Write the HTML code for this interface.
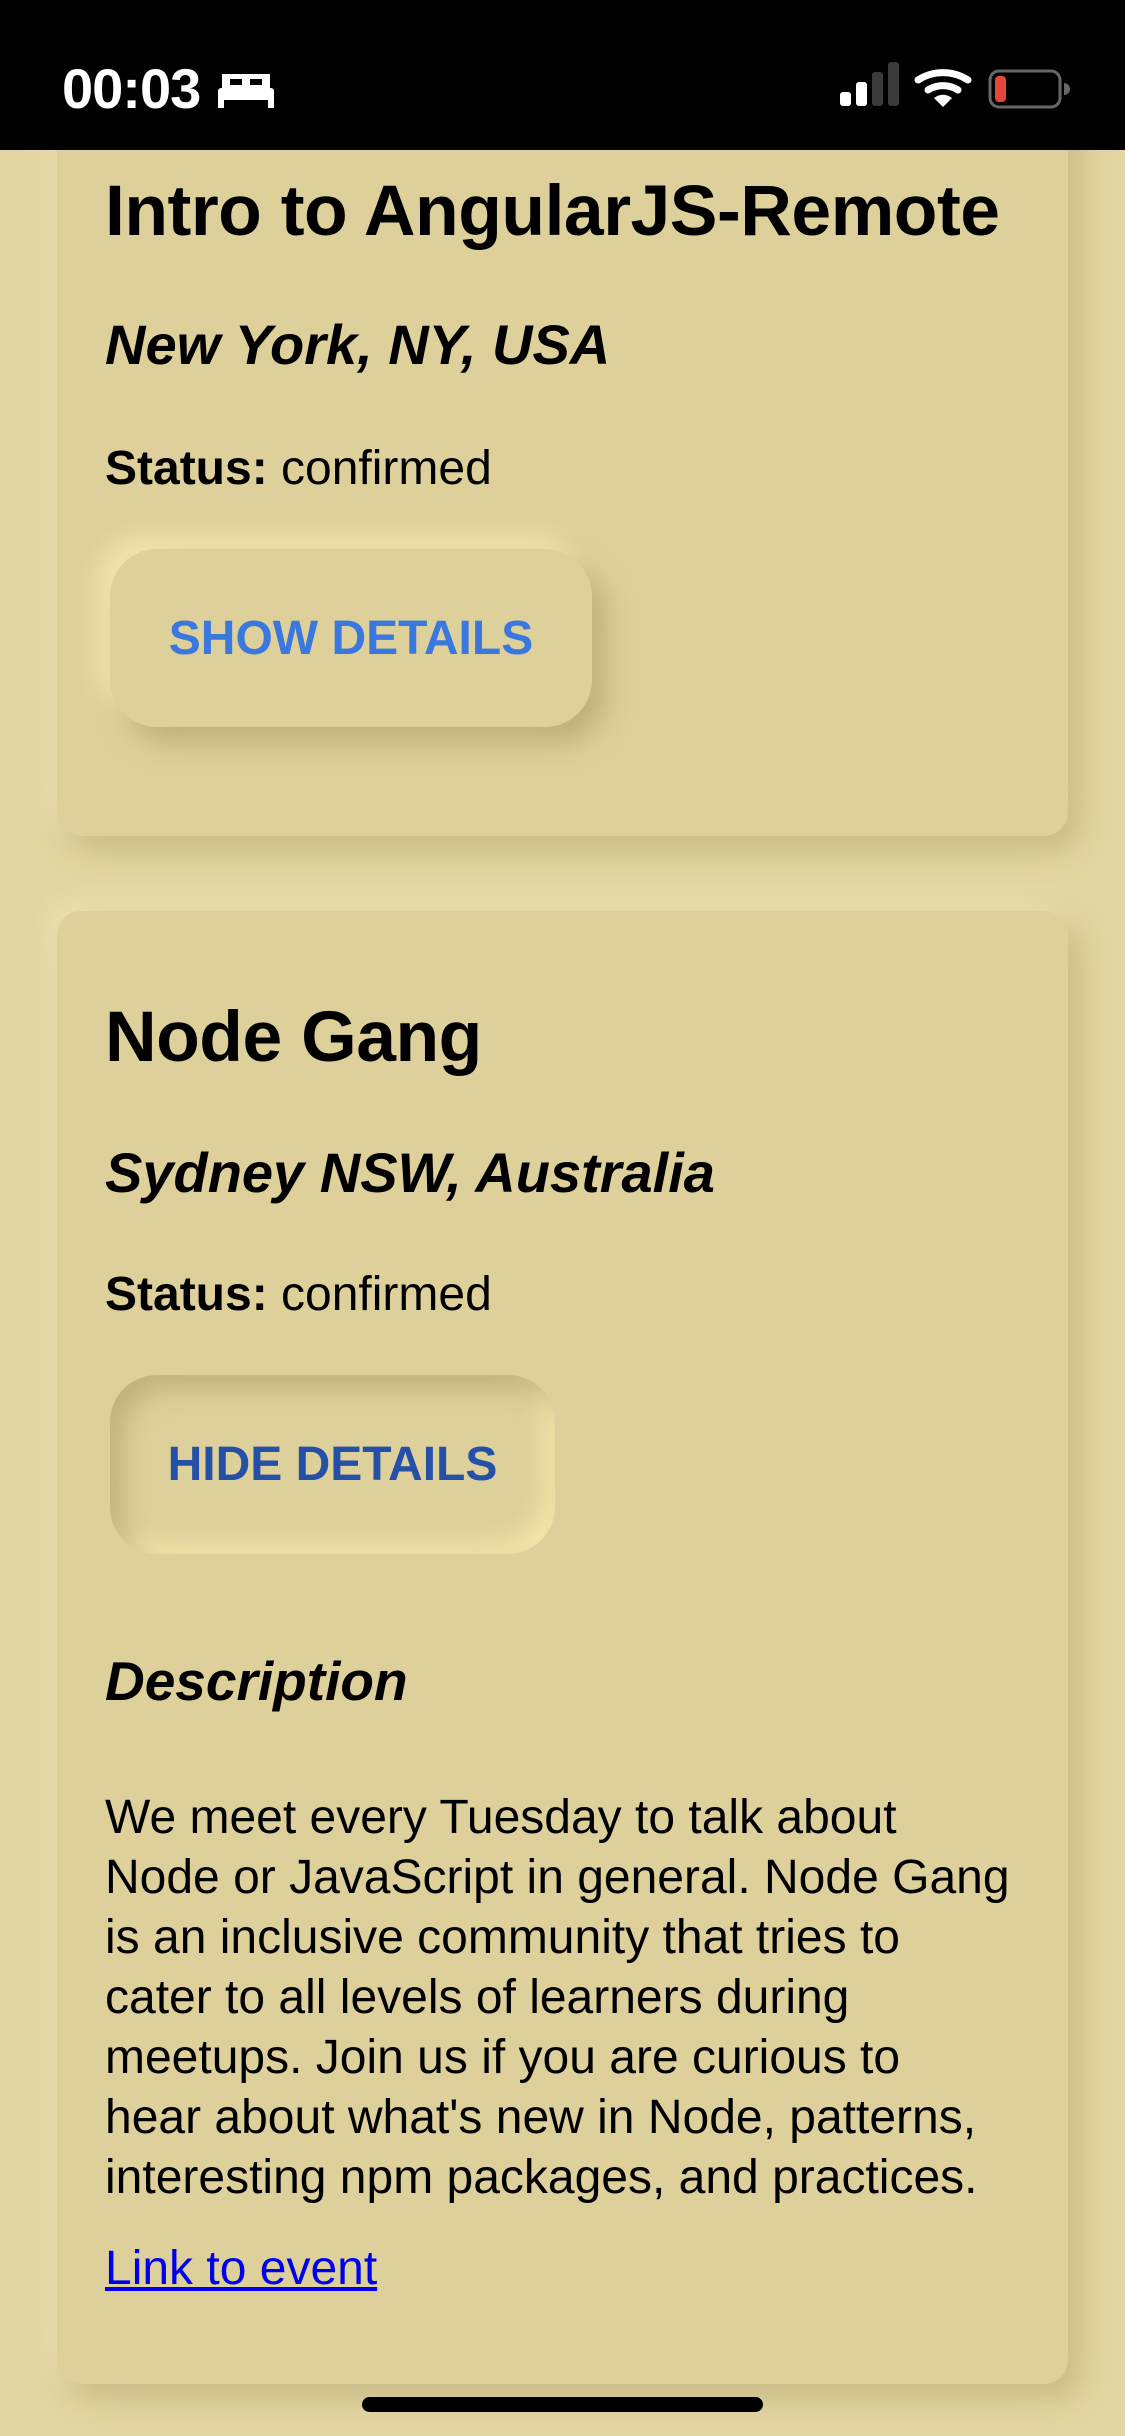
<!DOCTYPE html>
<html><head><meta charset="utf-8"><style>
*{margin:0;padding:0;box-sizing:border-box}
html,body{width:1125px;height:2436px;overflow:hidden;background:#e2d6a2;font-family:"Liberation Sans",sans-serif;color:#000}
.sb{position:absolute;left:0;top:0;width:1125px;height:150px;background:#000;z-index:5}
.time{position:absolute;left:62px;top:56px;color:#fff;font-size:56px;font-weight:bold;letter-spacing:-1px}
.card{position:absolute;left:57px;width:1011px;background:#ddd09b;border-radius:24px;box-shadow:12px 14px 30px rgba(150,135,80,.35),-10px -10px 28px rgba(245,235,190,.6)}
.t{position:absolute;left:48px;font-weight:bold;font-size:71.5px;letter-spacing:-0.5px;white-space:nowrap}
.loc{position:absolute;left:48px;font-weight:bold;font-style:italic;font-size:56px;white-space:nowrap}
.st{position:absolute;left:48px;font-size:48px}
.btn{position:absolute;left:53px;border-radius:47px;background:#ddd09b;font-weight:bold;font-size:48px;display:flex;align-items:center;justify-content:center}
.p{position:absolute;left:48px;width:960px;font-size:48px;line-height:60px;white-space:nowrap}
</style></head><body>
<div class="sb">
<div class="time">00:03</div>
<svg style="position:absolute;left:218px;top:72px" width="56" height="36" viewBox="0 0 56 36"><path d="M4 2h48v14H4z" fill="#fff"/><rect x="12" y="7" width="12" height="6" fill="#000"/><rect x="32" y="7" width="12" height="6" fill="#000"/><rect x="0" y="16" width="56" height="12" rx="3" fill="#fff"/><rect x="0" y="26" width="6" height="10" fill="#fff"/><rect x="50" y="26" width="6" height="10" fill="#fff"/></svg>
<svg style="position:absolute;left:838px;top:58px" width="240" height="52" viewBox="0 0 240 52">
<rect x="2" y="34" width="11" height="14" rx="3" fill="#fff"/><rect x="18" y="24" width="11" height="24" rx="3" fill="#fff"/><rect x="34" y="14" width="11" height="34" rx="3" fill="#3a3a3a"/><rect x="50" y="4" width="11" height="44" rx="3" fill="#3a3a3a"/>
<path d="M80 22a46 46 0 0 1 50 0" stroke="#fff" stroke-width="7" fill="none" stroke-linecap="round"/><path d="M90 32a28 28 0 0 1 30 0" stroke="#fff" stroke-width="7" fill="none" stroke-linecap="round"/><path d="M96 40l9 9 9-9a14 14 0 0 0-18 0z" fill="#fff"/>
<rect x="152" y="13" width="70" height="36" rx="9" fill="none" stroke="#666" stroke-width="3"/><rect x="157" y="18" width="11" height="26" rx="4" fill="#e5483b"/><path d="M226 25a5 5 0 0 1 0 12z" fill="#666"/>
</svg>
</div>
<div class="card" style="top:60px;height:776px">
<div class="t" style="top:110px">Intro to AngularJS-Remote</div>
<div class="loc" style="top:252px">New York, NY, USA</div>
<div class="st" style="top:381px"><b>Status:</b> confirmed</div>
<div class="btn" style="top:489px;width:482px;height:178px;color:#3a78e0;box-shadow:14px 16px 26px rgba(160,145,90,.5),-12px -12px 24px rgba(245,232,175,.9)">SHOW DETAILS</div>
</div>
<div class="card" style="top:911px;height:1473px">
<div class="t" style="top:85px">Node Gang</div>
<div class="loc" style="top:229px">Sydney NSW, Australia</div>
<div class="st" style="top:356px"><b>Status:</b> confirmed</div>
<div class="btn" style="top:464px;width:445px;height:179px;color:#2550a8;box-shadow:inset 14px 14px 24px rgba(170,155,100,.55),inset -12px -12px 22px rgba(245,230,170,.95)">HIDE DETAILS</div>
<div class="loc" style="top:738px;font-size:55px">Description</div>
<div class="p" style="top:877px">We meet every Tuesday to talk about<br>Node or JavaScript in general. Node Gang<br>is an inclusive community that tries to<br>cater to all levels of learners during<br>meetups. Join us if you are curious to<br>hear about what's new in Node, patterns,<br>interesting npm packages, and practices.</div>
<div class="p" style="top:1328px;color:#0000ee;text-decoration:underline">Link to event</div>
</div>
<div style="position:absolute;left:362px;top:2397px;width:401px;height:15px;border-radius:8px;background:#000"></div>
</body></html>
